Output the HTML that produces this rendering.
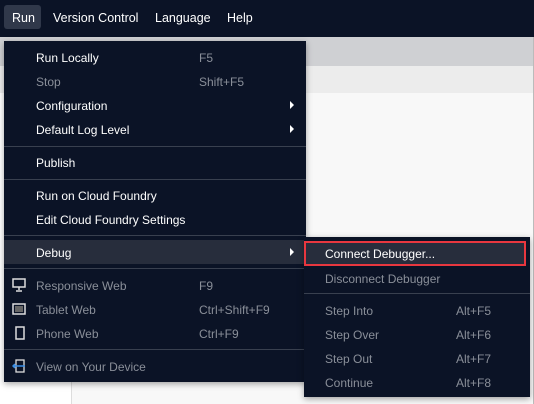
<!DOCTYPE html>
<html><head><style>
*{margin:0;padding:0;box-sizing:border-box}
body{width:534px;height:404px;position:relative;overflow:hidden;background:#f8f8f8;font-family:"Liberation Sans",sans-serif;font-size:12px}
.bar{position:absolute;left:0;top:0;width:534px;height:37px;background:#0b1326}
.bar span{position:absolute;top:11px;color:#fff;font-size:12.5px}
.g1{position:absolute;left:0;top:37px;width:534px;height:29px;background:#cfd0d3}
.g2{position:absolute;left:0;top:66px;width:534px;height:27px;background:#ececec}
.lp{position:absolute;left:0;top:93px;width:72px;height:311px;background:#fff;border-right:1px solid #ddd}
.rb{position:absolute;right:0;top:37px;width:1px;height:367px;background:#bbb}
.menu{position:absolute;background:#0b1326;box-shadow:0 2px 6px rgba(0,0,0,.35)}
.it{position:absolute;left:0;right:0;height:24px;color:#fff;line-height:26px}
.it .t{position:absolute}
.dis{color:#8a8f99}
.sep{position:absolute;left:0;right:0;height:1px;background:#39404f}
.arr{position:absolute;right:12px;top:8px;width:0;height:0;border-left:4px solid #fff;border-top:4px solid transparent;border-bottom:4px solid transparent}
</style></head><body>
<div class="bar">
<div style="position:absolute;left:4px;top:5px;width:37px;height:24px;background:#30384a;border-radius:3px"></div>
<span style="left:12px">Run</span><span style="left:53px">Version Control</span><span style="left:155px">Language</span><span style="left:227px">Help</span>
</div>
<div class="g1"></div><div class="g2"></div><div class="lp"></div><div class="rb"></div>

<div class="menu" style="left:4px;top:41px;width:302px;height:341px">
<div class="it" style="top:4px"><span class="t" style="left:32px">Run Locally</span><span class="t dis" style="left:195px">F5</span></div>
<div class="it dis" style="top:28px"><span class="t" style="left:32px">Stop</span><span class="t" style="left:195px">Shift+F5</span></div>
<div class="it" style="top:52px"><span class="t" style="left:32px">Configuration</span><i class="arr"></i></div>
<div class="it" style="top:76px"><span class="t" style="left:32px">Default Log Level</span><i class="arr"></i></div>
<div class="sep" style="top:105px"></div>
<div class="it" style="top:109px"><span class="t" style="left:32px">Publish</span></div>
<div class="sep" style="top:138px"></div>
<div class="it" style="top:142px"><span class="t" style="left:32px">Run on Cloud Foundry</span></div>
<div class="it" style="top:166px"><span class="t" style="left:32px">Edit Cloud Foundry Settings</span></div>
<div class="sep" style="top:194px"></div>
<div class="it" style="top:199px;background:#272d3c"><span class="t" style="left:32px">Debug</span><i class="arr"></i></div>
<div class="sep" style="top:227px"></div>
<div class="it dis" style="top:232px"><span class="t" style="left:32px">Responsive Web</span><span class="t" style="left:195px">F9</span>
<svg style="position:absolute;left:8px;top:5px" width="14" height="14"><rect x="1" y="1" width="12" height="8" fill="none" stroke="#ddd" stroke-width="1.5"/><path d="M7 9v3M4 13h6" stroke="#ddd" stroke-width="1.5"/></svg></div>
<div class="it dis" style="top:256px"><span class="t" style="left:32px">Tablet Web</span><span class="t" style="left:195px">Ctrl+Shift+F9</span>
<svg style="position:absolute;left:8px;top:6px" width="14" height="12"><rect x="1" y="1" width="12" height="10" fill="none" stroke="#ddd" stroke-width="1.5"/><rect x="3" y="3" width="8" height="6" fill="#666"/></svg></div>
<div class="it dis" style="top:280px"><span class="t" style="left:32px">Phone Web</span><span class="t" style="left:195px">Ctrl+F9</span>
<svg style="position:absolute;left:11px;top:5px" width="10" height="14"><rect x="1" y="1" width="8" height="12" fill="none" stroke="#ddd" stroke-width="1.5"/></svg></div>
<div class="sep" style="top:308px"></div>
<div class="it dis" style="top:313px"><span class="t" style="left:32px">View on Your Device</span>
<svg style="position:absolute;left:8px;top:5px" width="16" height="14"><rect x="4" y="1" width="8" height="12" fill="none" stroke="#ddd" stroke-width="1.3"/><path d="M1 7h12M3 5l-2 2 2 2" stroke="#3a8ee6" stroke-width="1.5" fill="none"/></svg></div>
</div>

<div class="menu" style="left:304px;top:237px;width:226px;height:160px">
<div class="it" style="top:4px;background:#272d3c;border:2px solid #e8373f;left:0;right:4px;height:25px;line-height:23px"><span class="t" style="left:19px">Connect Debugger...</span></div>
<div class="it dis" style="top:29px"><span class="t" style="left:21px">Disconnect Debugger</span></div>
<div class="sep" style="top:56px"></div>
<div class="it dis" style="top:61px"><span class="t" style="left:21px">Step Into</span><span class="t" style="left:152px">Alt+F5</span></div>
<div class="it dis" style="top:85px"><span class="t" style="left:21px">Step Over</span><span class="t" style="left:152px">Alt+F6</span></div>
<div class="it dis" style="top:109px"><span class="t" style="left:21px">Step Out</span><span class="t" style="left:152px">Alt+F7</span></div>
<div class="it dis" style="top:133px"><span class="t" style="left:21px">Continue</span><span class="t" style="left:152px">Alt+F8</span></div>
</div>
</body></html>
